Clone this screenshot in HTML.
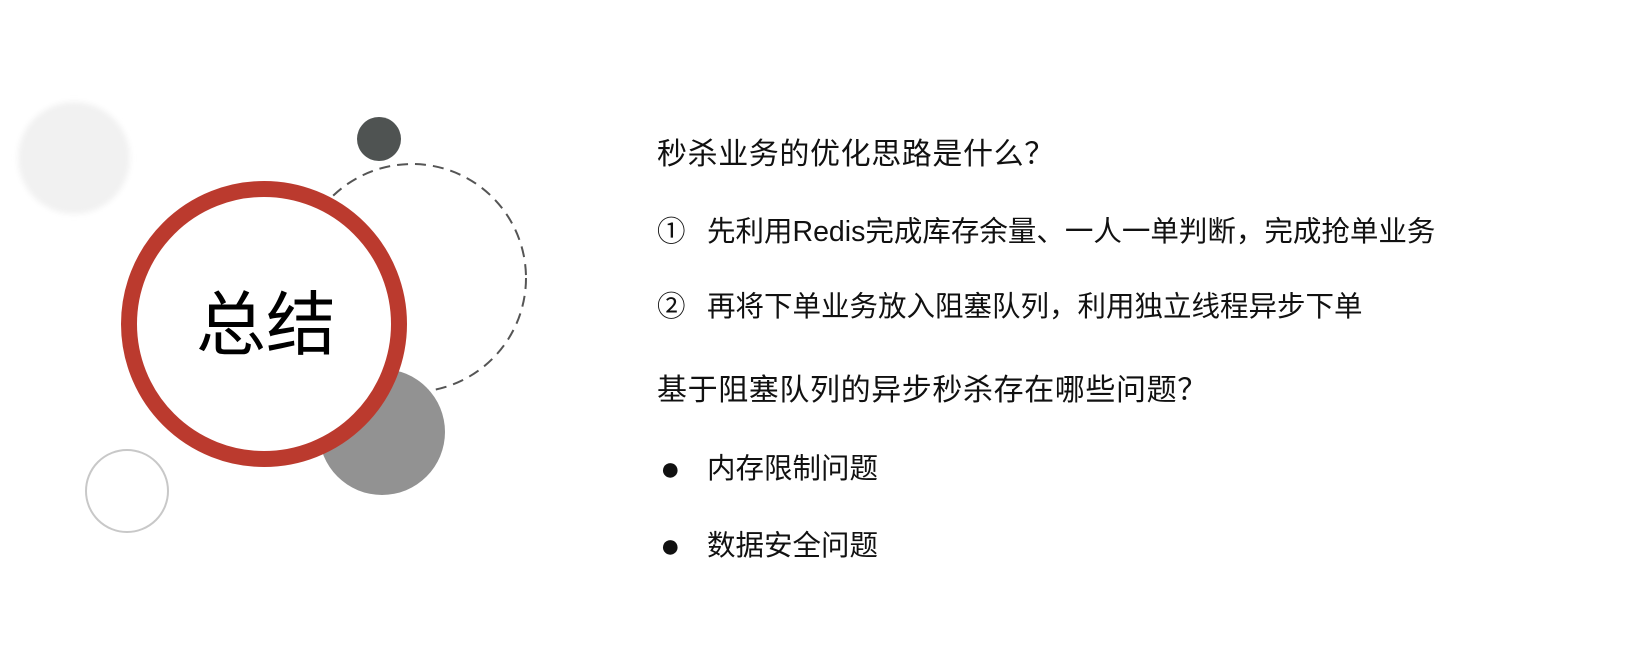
<!DOCTYPE html>
<html><head><meta charset="utf-8"><style>
body{margin:0;width:1625px;height:654px;background:#fff;overflow:hidden;position:relative;font-family:"Liberation Sans","Noto Sans CJK SC",sans-serif;color:#111}
.t{position:absolute;font-size:28.5px;white-space:nowrap;line-height:36px}
.h{font-size:30px;letter-spacing:0.6px}
</style></head><body>
<svg width="1625" height="654" style="position:absolute;left:0;top:0">
<defs><filter id="b"><feGaussianBlur stdDeviation="3"/></filter></defs>
<circle cx="74" cy="158" r="56" fill="#f1f1f1" filter="url(#b)"/>
<circle cx="412" cy="278" r="114" fill="none" stroke="#555" stroke-width="2" stroke-dasharray="11,7"/>
<circle cx="379" cy="139" r="22" fill="#4f5352"/>
<circle cx="382" cy="432" r="63" fill="#929292"/>
<circle cx="127" cy="491" r="41" fill="none" stroke="#c8c8c8" stroke-width="2"/>
<circle cx="264" cy="324" r="135" fill="#fff" stroke="#bb3a2e" stroke-width="16"/>
</svg>
<div class="t" style="left:196px;top:288px;font-size:70px;line-height:74px;color:#000">总结</div>
<div class="t h" style="left:657px;top:137px">秒杀业务的优化思路是什么？</div>
<div class="t" style="left:657px;top:214px">①</div><div class="t" style="left:707px;top:214px">先利用Redis完成库存余量、一人一单判断，完成抢单业务</div>
<div class="t" style="left:657px;top:289px">②</div><div class="t" style="left:707px;top:289px">再将下单业务放入阻塞队列，利用独立线程异步下单</div>
<div class="t h" style="left:657px;top:373px">基于阻塞队列的异步秒杀存在哪些问题？</div>
<div class="t" style="left:660px;top:451px;font-size:34px">●</div><div class="t" style="left:707px;top:451px">内存限制问题</div>
<div class="t" style="left:660px;top:528px;font-size:34px">●</div><div class="t" style="left:707px;top:528px">数据安全问题</div>
</body></html>
